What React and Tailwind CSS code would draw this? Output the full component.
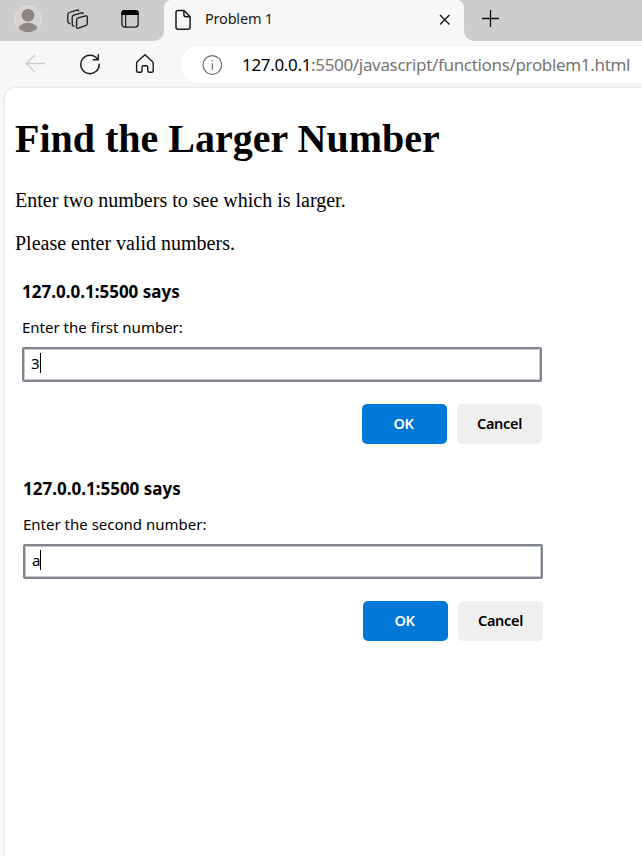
const ui = "font-['Noto_Sans','Open_Sans',sans-serif]";

function TabStrip() {
  return (
    <div className="flex h-[41px] bg-[#f7f7f7]">
      <div className="flex w-[164px] shrink-0 items-start rounded-br-[10px] bg-[#cdcdcd]">
        <svg className="ml-[14px] mt-[5px] shrink-0" width="28" height="28" viewBox="0 0 28 28">
          <defs>
            <clipPath id="face"><circle cx="14" cy="14" r="13.2" /></clipPath>
          </defs>
          <circle cx="14" cy="14" r="13.2" fill="#d5d3d0" stroke="#e1dfdc" />
          <g fill="#8b8784" clipPath="url(#face)">
            <circle cx="14" cy="10.3" r="6.3" />
            <ellipse cx="14" cy="26" rx="10.5" ry="8.2" />
          </g>
        </svg>
        <svg className="ml-[24px] mt-[8px] shrink-0" width="24" height="24" viewBox="0 0 24 24" fill="none" stroke="#1b1b1b" strokeWidth="1.3" strokeLinejoin="round" strokeLinecap="round">
          <path d="M12.2 9.9 19.6 7.9Q21.3 7.5 21.3 9.2V15.4Q21.3 16.8 20 17.3L12.5 20.2Q10.6 20.8 10.6 19V12Q10.6 10.4 12.2 9.9Z" />
          <path d="M8.2 18.2Q6.2 18.1 6.2 16.3V9.2Q6.2 7.6 7.8 7.1L15.5 4.8Q16.9 4.5 17.1 5.6" />
          <path d="M3.8 15.6Q1.8 15.3 1.8 13.6V6.6Q1.8 5 3.4 4.5L10.8 2.1Q12.3 1.7 12.6 2.8" />
        </svg>
        <svg className="ml-[30px] mt-[9px] shrink-0" width="20" height="20" viewBox="0 0 20 20" fill="none">
          <rect x="1.9" y="1.7" width="16.2" height="16.4" rx="3" stroke="#1b1b1b" strokeWidth="1.3" />
          <path d="M1.3 6V4Q1.3 1.1 4 1.1H16Q18.7 1.1 18.7 4V6Z" fill="#000" />
          <path d="M5.6 6V18" stroke="#1b1b1b" strokeWidth="1.2" />
        </svg>
      </div>
      <div className="w-[300px] shrink-0 bg-[#cdcdcd]">
        <div className="flex h-full items-start rounded-t-[7px] bg-[#f7f7f7]">
          <svg className="ml-[11px] mt-[9px] shrink-0" width="17" height="22" viewBox="0 0 17 22" fill="none" stroke="#1b1b1b" strokeWidth="1.5" strokeLinejoin="round">
            <path d="M3 1.5H9L15.1 7.6V18.2Q15.1 20.2 13.1 20.2H3Q1 20.2 1 18.2V3.5Q1 1.5 3 1.5Z" />
            <path d="M8.9 1.5V5.8Q8.9 7.7 10.8 7.7H15" />
          </svg>
          <span className={`${ui} ml-[13px] mt-[8px] w-[220px] whitespace-nowrap text-[14.5px] leading-[20px] tracking-[-0.2px] text-[#1b1b1b]`}>Problem 1</span>
          <svg className="ml-[14px] mt-[14px] shrink-0" width="12" height="12" viewBox="0 0 12 12" stroke="#1b1b1b" strokeWidth="1.4">
            <path d="M1 1 10.5 10.5M10.5 1 1 10.5" />
          </svg>
        </div>
      </div>
      <div className="flex-1 rounded-bl-[10px] bg-[#cdcdcd]">
        <svg className="ml-[17px] mt-[10px]" width="19" height="19" viewBox="0 0 19 19" stroke="#111" strokeWidth="1.3">
          <path d="M1 8.5H18M9.5 0V17" />
        </svg>
      </div>
    </div>
  );
}

function Toolbar() {
  return (
    <div className="flex h-[47px] items-start overflow-hidden">
      <svg className="ml-[25px] mt-[13px] shrink-0" width="21" height="20" viewBox="0 0 21 20" fill="none" stroke="#cdcdcd" strokeWidth="1.3">
        <path d="M20 9.5H1M10 1 1 9.5 10 18" />
      </svg>
      <svg className="ml-[33px] mt-[12px] shrink-0" width="22" height="22" viewBox="0 0 22 22" fill="none" stroke="#1b1b1b" strokeWidth="1.5" strokeLinecap="round" strokeLinejoin="round">
        <path d="M18.6 6.2A9.2 9.2 0 1 0 20.2 11.2" />
        <path d="M19.3 1.7V6.7H14.2" />
      </svg>
      <svg className="ml-[34px] mt-[12px] shrink-0" width="20" height="22" viewBox="0 0 20 22" fill="none" stroke="#1b1b1b" strokeWidth="1.4" strokeLinejoin="round">
        <path d="M10 1.7 2.2 8.7Q1.6 9.3 1.6 10.2V17.7Q1.6 19.2 3 19.2H5.5Q7 19.2 7 17.7V14.2Q7 12.7 8.5 12.7H11.3Q12.8 12.7 12.8 14.2V17.7Q12.8 19.2 14.3 19.2H16.8Q18.2 19.2 18.2 17.7V10.2Q18.2 9.3 17.6 8.7Z" />
      </svg>
      <div className="ml-[25px] mt-[5px] flex h-[37px] flex-1 items-center rounded-l-full bg-white shadow-[0_0_2px_#e5e5e5]">
        <svg className="ml-[22px] shrink-0" width="20" height="20" viewBox="0 0 20 20" fill="none" stroke="#6b6b6b" strokeWidth="1.2">
          <circle cx="10.3" cy="10" r="9.3" />
          <path d="M10.3 8.5V14.7M10.3 5.1V6.6" />
        </svg>
        <span className={`${ui} ml-[20px] whitespace-nowrap text-[17px] leading-[24px] tracking-[-0.33px] text-[#767676]`}><span className="text-black">127.0.0.1</span>:5500/javascript/functions/problem1.html</span>
      </div>
    </div>
  );
}

function Prompt({ message, value }) {
  return (
    <section className={`${ui} w-[520px] text-black`}>
      <h2 className="whitespace-nowrap text-[17px] font-bold leading-[24px]">127.0.0.1:5500 says</h2>
      <p className="mt-[11px] whitespace-nowrap text-[15px] leading-[24px]">{message}</p>
      <div className="mt-[8px] flex h-[35px] items-start rounded-[2px] border-2 border-[#80858d] pl-[7px] shadow-[inset_0_0_0_1px_#c5c8cd]">
        <span className="mt-[2px] text-[15px] leading-[24px]">{value}</span>
        <span className="mt-[4px] h-[20px] w-px bg-black" />
      </div>
      <div className="mt-[22px] flex justify-end gap-[10px] text-[14.5px] font-semibold tracking-[-0.3px]">
        <button className="h-[40px] w-[85px] rounded-[5px] bg-[#0078d7] pr-[2px] text-white">OK</button>
        <button className="h-[40px] w-[85px] rounded-[5px] bg-[#efefef] text-black">Cancel</button>
      </div>
    </section>
  );
}

export default function App() {
  return (
    <div className="flex h-[856px] w-[642px] flex-col overflow-hidden bg-[#f7f7f7]">
      <TabStrip />
      <Toolbar />
      <main className="ml-[5px] flex-1 rounded-tl-[10px] bg-white pl-[10px] shadow-[0_0_3px_#d4d4d4]">
        <div className="font-['Liberation_Serif',serif] text-black">
          <h1 className="pt-[28px] text-[40px] font-bold leading-[46px]">Find the Larger Number</h1>
          <p className="mt-[27px] text-[20px] leading-[23px]">Enter two numbers to see which is larger.</p>
          <p className="mt-[20px] text-[20px] leading-[23px]">Please enter valid numbers.</p>
        </div>
        <div className="ml-[7px] mt-[25px]">
          <Prompt message="Enter the first number:" value="3" />
        </div>
        <div className="ml-[8px] mt-[33px]">
          <Prompt message="Enter the second number:" value="a" />
        </div>
      </main>
    </div>
  );
}
